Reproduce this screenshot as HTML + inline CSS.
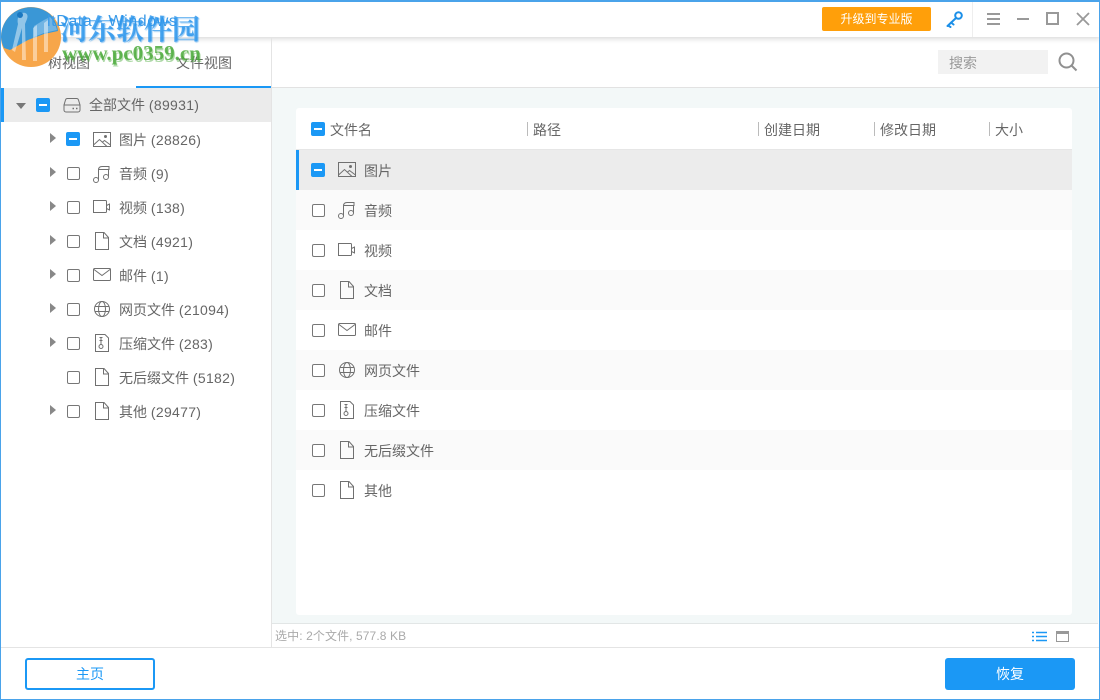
<!DOCTYPE html>
<html lang="zh"><head><meta charset="utf-8"><title>ItData</title>
<style>
html,body{margin:0;padding:0}
body{width:1100px;height:700px;position:relative;overflow:hidden;background:#fff;font-family:"Liberation Sans","Noto Sans CJK SC",sans-serif;font-size:14px;color:#666}
.a{position:absolute}
.t{position:absolute;white-space:nowrap;line-height:20px;font-size:14px;color:#666}
.t span{letter-spacing:.3px}
.cb{position:absolute;width:11px;height:11px;border:1px solid #777;border-radius:2px;background:#fff}
.cm{position:absolute;width:14px;height:14px;border-radius:2px;background:#1b98f5}
.cm:after{content:"";position:absolute;left:3px;top:6px;width:8px;height:2px;background:#fff}
.ar{position:absolute;width:0;height:0;border-left:6px solid #888;border-top:5.5px solid transparent;border-bottom:5.5px solid transparent}
svg.i{position:absolute;width:20px;height:20px;fill:none;stroke:#707070;stroke-width:1}
.row{position:absolute;left:296px;width:776px;height:40px}
.sep{position:absolute;width:1px;height:14px;background:#bbb;top:122px}
</style></head><body>
<svg width="0" height="0" style="position:absolute">
<symbol id="pic" viewBox="0 0 20 20"><path d="M1.500 2.500h17v14h-17zM1.500 15l6-5.500 7.500 7M10.500 12l2-1.500 6 4.500"/><circle cx="13.500" cy="6.500" r="1" fill="#707070"/></symbol>
<symbol id="mus" viewBox="0 0 20 20"><circle cx="4" cy="16" r="2.500"/><circle cx="14" cy="13" r="2.500"/><path d="M6.500 16V6C6.500 3.500 8 2.500 10 2.500h7v3h-10.500M16.500 5.500V13"/></symbol>
<symbol id="vid" viewBox="0 0 20 20"><path d="M1.500 3.500h12a1 1 0 0 1 1 1v10a1 1 0 0 1-1 1h-12zM14.500 8.500l3-1.500v6l-3-1.500"/></symbol>
<symbol id="doc" viewBox="0 0 20 20"><path d="M3.500 1.500h8.500l4.500 5v12h-13zM11.500 1.500v5.500h5"/></symbol>
<symbol id="mail" viewBox="0 0 20 20"><path d="M2.500 3.500h15a1 1 0 0 1 1 1v10a1 1 0 0 1-1 1h-15a1 1 0 0 1-1-1v-10a1 1 0 0 1 1-1zM2 4.500l8 6 8-6"/></symbol>
<symbol id="web" viewBox="0 0 20 20"><circle cx="10" cy="10" r="7.500"/><ellipse cx="10" cy="10" rx="3.500" ry="7.500"/><path d="M2.500 7.500h15M2.500 12.500h15"/></symbol>
<symbol id="zip" viewBox="0 0 20 20"><path d="M3.500 1.500h9.500l3.500 3.500v13.500h-13zM7.500 4.500h3M7.500 7.500h3M9 4.500v7"/><circle cx="9" cy="13.500" r="2"/></symbol>
<symbol id="hdd" viewBox="0 0 20 20"><path d="M5.500 3.500h9a2 2 0 0 1 2 1.500l1.500 5v5a2 2 0 0 1-2 2H4a2 2 0 0 1-2-2v-5L3.500 5a2 2 0 0 1 2-1.500zM2 10h16"/><path d="M10.500 13.500h1.500M14 13.500h1.500" stroke-width="1.500"/></symbol>
</svg>

<!-- title bar -->
<div class="a" style="left:0;top:0;width:1100px;height:37px;background:#fff;box-shadow:0 2px 5px rgba(0,0,0,.15)"></div>
<div class="a" style="left:972px;top:1px;width:1px;height:36px;background:#eee"></div>
<div class="a" style="left:822px;top:7px;width:109px;height:24px;background:#ff9f0a;border-radius:2px;color:#fff;font-size:12px;line-height:24px;text-align:center">升级到专业版</div>
<svg class="a" style="left:945px;top:10px" width="19" height="18" viewBox="0 0 19 18" fill="none" stroke="#1b8fe8" stroke-width="2"><circle cx="13.500" cy="5.500" r="3.300"/><path d="M11 8L2.500 16M3 15.500l2.500 1.500M6 12.500l2.500 2" stroke-linecap="round"/></svg>
<div class="a" style="left:987px;top:13px;width:13px;height:2px;background:#999;box-shadow:0 5px 0 #999,0 10px 0 #999"></div>
<div class="a" style="left:1017px;top:18px;width:12px;height:2px;background:#999"></div>
<div class="a" style="left:1046px;top:12px;width:9px;height:9px;border:2px solid #999"></div>
<svg class="a" style="left:1076px;top:12px" width="14" height="14" viewBox="0 0 14 14" stroke="#999" stroke-width="1.800" fill="none"><path d="M1 1l12 12M13 1L1 13"/></svg>

<!-- tabs -->
<div class="t" style="left:48px;top:53px">树视图</div>
<div class="t" style="left:176px;top:53px">文件视图</div>
<div class="a" style="left:136px;top:86px;width:135px;height:2px;background:#1b98f5"></div>
<div class="a" style="left:271px;top:38px;width:1px;height:610px;background:#e4e4e4"></div>
<div class="a" style="left:272px;top:87px;width:828px;height:1px;background:#e2e2e2"></div>
<div class="a" style="left:938px;top:50px;width:110px;height:24px;background:#f2f2f2;color:#999;font-size:14px;line-height:26px;text-indent:11px">搜索</div>
<svg class="a" style="left:1057px;top:51px" width="22" height="22" viewBox="0 0 22 22" fill="none" stroke="#909090" stroke-width="2"><circle cx="9.500" cy="9.500" r="7"/><path d="M14.500 14.500l5 5"/></svg>

<!-- left tree -->
<div class="a" style="left:2px;top:88px;width:269px;height:34px;background:#ebebeb"></div>
<div class="a" style="left:1px;top:88px;width:3px;height:34px;background:#1b98f5"></div>
<div class="a" style="left:16px;top:103px;width:0;height:0;border-top:6px solid #777;border-left:5.500px solid transparent;border-right:5.500px solid transparent"></div>
<div class="cm" style="left:36px;top:98px"></div>
<svg class="i" style="left:62px;top:95px"><use href="#hdd"/></svg>
<div class="t" style="left:89px;top:95px">全部文件 <span>(89931)</span></div>

<div class="ar" style="left:50px;top:133px"></div><div class="cm" style="left:66px;top:132px"></div><svg class="i" style="left:92px;top:130px"><use href="#pic"/></svg><div class="t" style="left:119px;top:130px">图片 <span>(28826)</span></div>
<div class="ar" style="left:50px;top:167px"></div><div class="cb" style="left:67px;top:167px"></div><svg class="i" style="left:92px;top:164px"><use href="#mus"/></svg><div class="t" style="left:119px;top:164px">音频 <span>(9)</span></div>
<div class="ar" style="left:50px;top:201px"></div><div class="cb" style="left:67px;top:201px"></div><svg class="i" style="left:92px;top:197px"><use href="#vid"/></svg><div class="t" style="left:119px;top:198px">视频 <span>(138)</span></div>
<div class="ar" style="left:50px;top:235px"></div><div class="cb" style="left:67px;top:235px"></div><svg class="i" style="left:92px;top:231px"><use href="#doc"/></svg><div class="t" style="left:119px;top:232px">文档 <span>(4921)</span></div>
<div class="ar" style="left:50px;top:269px"></div><div class="cb" style="left:67px;top:269px"></div><svg class="i" style="left:92px;top:265px"><use href="#mail"/></svg><div class="t" style="left:119px;top:266px">邮件 <span>(1)</span></div>
<div class="ar" style="left:50px;top:303px"></div><div class="cb" style="left:67px;top:303px"></div><svg class="i" style="left:92px;top:299px"><use href="#web"/></svg><div class="t" style="left:119px;top:300px">网页文件 <span>(21094)</span></div>
<div class="ar" style="left:50px;top:337px"></div><div class="cb" style="left:67px;top:337px"></div><svg class="i" style="left:92px;top:333px"><use href="#zip"/></svg><div class="t" style="left:119px;top:334px">压缩文件 <span>(283)</span></div>
<div class="cb" style="left:67px;top:371px"></div><svg class="i" style="left:92px;top:367px"><use href="#doc"/></svg><div class="t" style="left:119px;top:368px">无后缀文件 <span>(5182)</span></div>
<div class="ar" style="left:50px;top:405px"></div><div class="cb" style="left:67px;top:405px"></div><svg class="i" style="left:92px;top:401px"><use href="#doc"/></svg><div class="t" style="left:119px;top:402px">其他 <span>(29477)</span></div>

<!-- right panel -->
<div class="a" style="left:272px;top:88px;width:826px;height:535px;background:#f3f8f8"></div>
<div class="a" style="left:296px;top:108px;width:776px;height:507px;background:#fff;border-radius:3px"></div>
<div class="a" style="left:296px;top:149px;width:776px;height:1px;background:#e6e6e6"></div>
<div class="cm" style="left:311px;top:122px"></div>
<div class="t" style="left:330px;top:120px">文件名</div>
<div class="sep" style="left:527px"></div><div class="t" style="left:533px;top:120px">路径</div>
<div class="sep" style="left:758px"></div><div class="t" style="left:764px;top:120px">创建日期</div>
<div class="sep" style="left:874px"></div><div class="t" style="left:880px;top:120px">修改日期</div>
<div class="sep" style="left:989px"></div><div class="t" style="left:995px;top:120px">大小</div>

<div class="row" style="top:150px;background:#ececec"></div>
<div class="a" style="left:296px;top:150px;width:3px;height:40px;background:#1b98f5"></div>
<div class="row" style="top:190px;background:#fafafa"></div>
<div class="row" style="top:270px;background:#fafafa"></div>
<div class="row" style="top:350px;background:#fafafa"></div>
<div class="row" style="top:430px;background:#fafafa"></div>

<div class="cm" style="left:311px;top:163px"></div><svg class="i" style="left:337px;top:160px"><use href="#pic"/></svg><div class="t" style="left:364px;top:161px">图片</div>
<div class="cb" style="left:312px;top:204px"></div><svg class="i" style="left:337px;top:200px"><use href="#mus"/></svg><div class="t" style="left:364px;top:201px">音频</div>
<div class="cb" style="left:312px;top:244px"></div><svg class="i" style="left:337px;top:240px"><use href="#vid"/></svg><div class="t" style="left:364px;top:241px">视频</div>
<div class="cb" style="left:312px;top:284px"></div><svg class="i" style="left:337px;top:280px"><use href="#doc"/></svg><div class="t" style="left:364px;top:281px">文档</div>
<div class="cb" style="left:312px;top:324px"></div><svg class="i" style="left:337px;top:320px"><use href="#mail"/></svg><div class="t" style="left:364px;top:321px">邮件</div>
<div class="cb" style="left:312px;top:364px"></div><svg class="i" style="left:337px;top:360px"><use href="#web"/></svg><div class="t" style="left:364px;top:361px">网页文件</div>
<div class="cb" style="left:312px;top:404px"></div><svg class="i" style="left:337px;top:400px"><use href="#zip"/></svg><div class="t" style="left:364px;top:401px">压缩文件</div>
<div class="cb" style="left:312px;top:444px"></div><svg class="i" style="left:337px;top:440px"><use href="#doc"/></svg><div class="t" style="left:364px;top:441px">无后缀文件</div>
<div class="cb" style="left:312px;top:484px"></div><svg class="i" style="left:337px;top:480px"><use href="#doc"/></svg><div class="t" style="left:364px;top:481px">其他</div>

<!-- status bar -->
<div class="a" style="left:272px;top:623px;width:826px;height:1px;background:#e2e6e6"></div>
<div class="t" style="left:275px;top:626px;font-size:12px;color:#aaa;letter-spacing:.1px">选中: 2个文件, 577.8 KB</div>
<svg class="a" style="left:1032px;top:631px" width="15" height="11" viewBox="0 0 15 11" stroke="#1b98f5" stroke-width="1.500"><path d="M0 1.500h2M4 1.500h11M0 5.500h2M4 5.500h11M0 9.500h2M4 9.500h11"/></svg>
<div class="a" style="left:1056px;top:631px;width:11px;height:7px;border:1px solid #999;border-top:3px solid #999"></div>

<!-- bottom -->
<div class="a" style="left:1px;top:647px;width:1098px;height:1px;background:#e4e4e4"></div>
<div class="a" style="left:25px;top:658px;width:126px;height:28px;border:2px solid #1b98f5;border-radius:3px;color:#1b98f5;text-align:center;line-height:29px">主页</div>
<div class="a" style="left:945px;top:658px;width:130px;height:32px;background:#1b98f5;border-radius:3px;color:#fff;text-align:center;line-height:33px">恢复</div>

<!-- logo, watermark, title -->
<svg class="a" style="left:0;top:4px" width="64" height="66" viewBox="0 0 64 66">
<circle cx="31" cy="33" r="30" fill="#f7a64a"/>
<path d="M1 33A30 30 0 0 1 50 10C54 14 57 20 58 27L44 30 28 36 10 46 4 44A30 30 0 0 1 1 33z" fill="#3a97d6"/>
<path d="M34 22l10-6 6-3c3 3 6 8 7 13L44 29 34 33z" fill="#7fbce6" opacity=".8"/>
<path d="M20 10c5-3 9 0 7 5l-2 5 1 36h-4V24l-7 24-3-2 6-26c-1-4 0-8 2-10zM33 24l4-3v36h-4zM44 19l4-3v32h-4z" fill="#fff" opacity=".45"/>
<circle cx="20" cy="11" r="3" fill="#1b78c0"/>
</svg>
<div class="a" style="left:47px;top:11px;font-size:16px;line-height:22px;letter-spacing:.6px;color:#3a9ae8;white-space:nowrap">ltData - Windows</div>
<div class="a" style="left:60px;top:8px;font-size:28px;line-height:40px;font-weight:700;color:rgba(45,150,235,.82);text-shadow:1px 1px 1px rgba(45,150,235,.55);font-family:'Noto Serif CJK SC','Noto Sans CJK SC',serif;white-space:nowrap">河东软件园</div>
<div class="a" style="left:62px;top:41px;font-size:21px;line-height:24px;font-weight:700;color:rgba(76,170,60,.85);text-shadow:1px 2px 0 rgba(76,170,60,.45);font-family:'Liberation Serif',serif;white-space:nowrap">www.pc0359.cn</div>

<!-- window border -->
<div class="a" style="left:0;top:0;width:1098px;height:698px;border:1px solid #4aa3ea"></div>
<div class="a" style="left:0;top:0;width:1100px;height:2px;background:#4aa3ea"></div>
</body></html>
